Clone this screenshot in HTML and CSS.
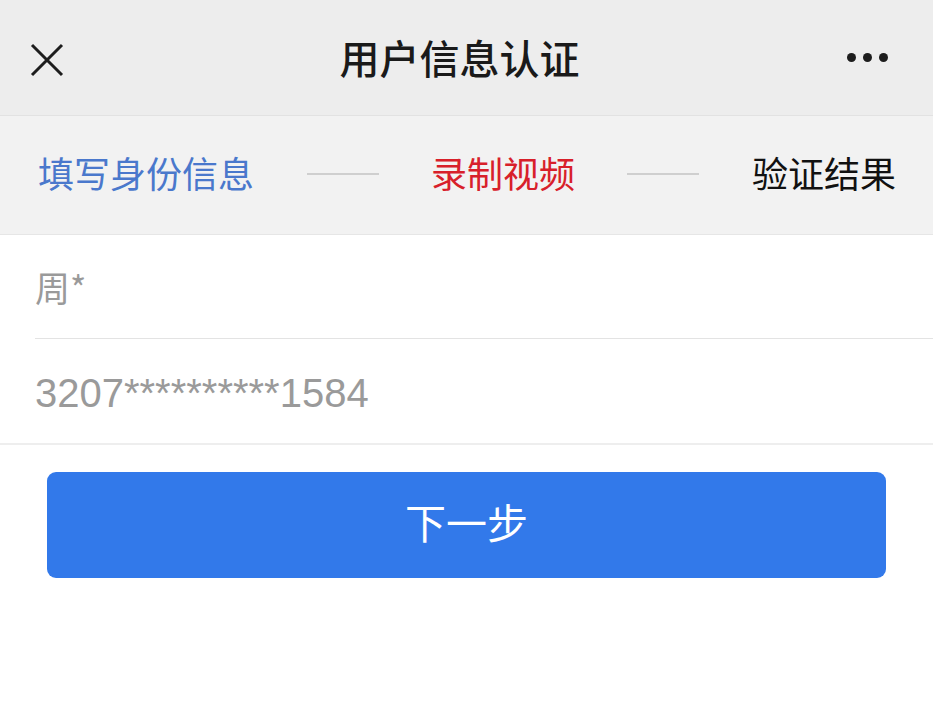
FILE: index.html
```html
<!DOCTYPE html>
<html lang="zh-CN">
<head>
    <meta charset="UTF-8">
    <meta name="viewport" content="width=device-width, initial-scale=1.0">
    <title>用户信息认证</title>
    <link rel="stylesheet" href="styles.css">
</head>
<body>
    <div class="nav-bar">
        <button class="nav-btn close-btn" aria-label="关闭">
            <svg width="36" height="36" viewBox="0 0 36 36">
                <path d="M3 3 L33 33 M33 3 L3 33" stroke="#1d1d1d" stroke-width="3" fill="none"/>
            </svg>
        </button>
        <h1 class="nav-title">用户信息认证</h1>
        <button class="nav-btn more-btn" aria-label="更多">
            <span class="dot"></span><span class="dot"></span><span class="dot"></span>
        </button>
    </div>

    <div class="steps">
        <span class="step done">填写身份信息</span>
        <span class="step-line"></span>
        <span class="step active">录制视频</span>
        <span class="step-line"></span>
        <span class="step">验证结果</span>
    </div>

    <div class="form-list">
        <div class="form-row">周*</div>
        <div class="form-row num">3207**********1584</div>
    </div>

    <div class="actions">
        <button class="next-btn">下一步</button>
    </div>
</body>
</html>
```

FILE: styles.css
```css
* {
    margin: 0;
    padding: 0;
    box-sizing: border-box;
    font-family: "Noto Sans CJK SC", "Noto Sans", sans-serif;
}

body {
    background-color: #fff;
    width: 933px;
    min-height: 728px;
}

.nav-bar {
    height: 116px;
    background-color: #ededed;
    border-bottom: 1px solid #e2e2e2;
    display: flex;
    align-items: center;
    justify-content: space-between;
    padding: 0 45px 0 29px;
}

.nav-btn {
    background: none;
    border: none;
    width: 60px;
    height: 40px;
    display: flex;
    align-items: center;
    cursor: pointer;
}

.close-btn {
    padding-top: 5px;
}

.more-btn {
    justify-content: flex-end;
    gap: 7px;
}

.dot {
    width: 9px;
    height: 9px;
    border-radius: 50%;
    background-color: #1d1d1d;
}

.nav-title {
    font-size: 40px;
    font-weight: 500;
    color: #1a1a1a;
    margin-top: -2px;
    margin-left: 2px;
}

.steps {
    height: 119px;
    background-color: #f2f2f2;
    border-bottom: 1px solid #e6e6e6;
    display: flex;
    align-items: center;
    justify-content: space-between;
    padding: 0 37px 6px 38px;
}

.step {
    font-size: 36px;
    color: #111;
}

.step.done {
    color: #4a78cc;
}

.step.active {
    color: #d8202a;
}

.step-line {
    width: 72px;
    height: 2px;
    background-color: #cfcfcf;
    margin-top: 4px;
}

.form-list {
    border-bottom: 2px solid #eeeeee;
}

.form-row {
    height: 104px;
    margin-left: 35px;
    display: flex;
    align-items: center;
    font-size: 35px;
    color: #9a9a9a;
    border-bottom: 1px solid #e3e3e3;
}

.form-row:last-child {
    border-bottom: none;
}

.form-row.num {
    font-family: "Liberation Sans", "Noto Sans CJK SC", sans-serif;
    font-size: 40px;
    padding-top: 4px;
}

.actions {
    padding: 27px 47px 0 47px;
}

.next-btn {
    width: 100%;
    height: 106px;
    background-color: #3279ea;
    color: #fff;
    border: none;
    border-radius: 9px;
    font-size: 41px;
    padding-bottom: 8px;
    cursor: pointer;
}
```
